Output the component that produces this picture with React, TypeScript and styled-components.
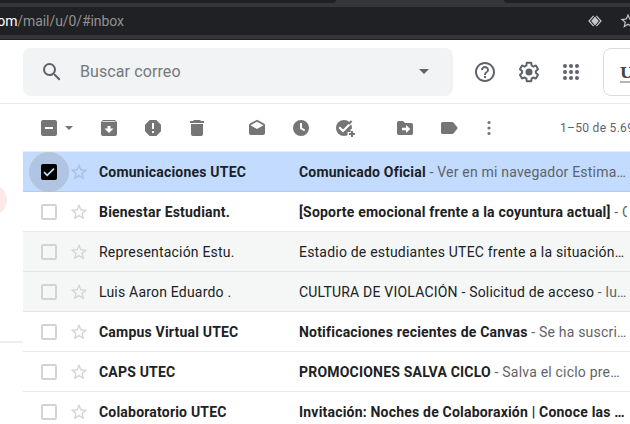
import React from "react";
import styled, { createGlobalStyle } from "styled-components";
import { MdSearch, MdHelpOutline, MdStarBorder } from "react-icons/md";

const GlobalStyle = createGlobalStyle`
  * { box-sizing: border-box; }
  body {
    margin: 0;
    background: #fff;
    font-family: Roboto, sans-serif;
    color: #202124;
    overflow: hidden;
  }
  svg { display: block; flex: none; }
`;

const Page = styled.div`
  width: 630px;
  height: 424px;
  display: flex;
  flex-direction: column;
  overflow: hidden;
`;

const TabStrip = styled.div`
  height: 3px;
  flex: none;
  display: flex;
  justify-content: space-between;
  background: #35363a;
`;

const InactiveTabs = styled.div<{ $side: "left" | "right" }>`
  width: ${(p) => (p.$side === "left" ? 336 : 126)}px;
  background: #202124;
  border-radius: ${(p) => (p.$side === "left" ? "0 0 4px 0" : "0 0 0 4px")};
`;

const BrowserBar = styled.div`
  height: 37px;
  flex: none;
  background: #35363a;
  border-bottom: 1px solid #202124;
  padding: 4px 0;
`;

const AddressField = styled.div`
  height: 28px;
  display: flex;
  align-items: center;
  background: #202124;
  color: #9aa0a6;
`;

const Url = styled.div`
  width: 590px;
  flex: none;
  margin-left: -10px;
  font-size: 14px;
  line-height: 28px;
  letter-spacing: -0.08px;
  color: #909193;
  white-space: nowrap;
`;

const Host = styled.span`
  color: #fff;
`;

const AddressIcons = styled.div`
  display: flex;
  align-items: center;
  gap: 17px;
  margin-left: 8px;
  color: #c4c5c7;
`;

const Header = styled.header`
  height: 64px;
  flex: none;
  display: flex;
  align-items: center;
  padding-left: 23px;
  border-bottom: 1px solid #ebebeb;
  color: #5f6368;
`;

const SearchBox = styled.div`
  width: 430px;
  height: 48px;
  flex: none;
  display: flex;
  align-items: center;
  padding: 0 24px 0 17px;
  border-radius: 8px;
  background: #f1f3f4;
`;

const Placeholder = styled.span`
  flex: 1;
  margin-left: 16px;
  font-size: 16px;
  letter-spacing: 0.1px;
  color: #75787b;
`;

const HeaderActions = styled.div`
  display: flex;
  gap: 20px;
  margin-left: 20px;
`;

const AppsButton = styled.div`
  margin-left: -2px;
`;

const AccountCard = styled.div`
  width: 80px;
  height: 48px;
  flex: none;
  margin-left: 20px;
  padding: 17px 0 0 16px;
  border: 1px solid #dadce0;
  border-radius: 8px;
`;

const Brand = styled.div`
  width: 50px;
  height: 17px;
  border-bottom: 2px solid #b4b4b4;
  font: bold 15px/15px "DejaVu Serif", serif;
  color: #444;
`;

const Body = styled.div`
  flex: 1;
  min-height: 0;
  display: flex;
`;

const SideNav = styled.aside`
  width: 23px;
  flex: none;
  display: flex;
  flex-direction: column;
`;

const ActiveFolder = styled.div`
  width: 7px;
  height: 32px;
  flex: none;
  margin-top: 80px;
  overflow: hidden;
  display: flex;
  justify-content: flex-end;

  &::before {
    content: "";
    width: 32px;
    flex: none;
    border-radius: 16px;
    background: #fce8e6;
  }
`;

const NavDivider = styled.div`
  height: 2px;
  margin-top: 125px;
  background: #eeeef0;
  border-radius: 0 2px 0 0;
`;

const Main = styled.main`
  width: 607px;
`;

const Toolbar = styled.div`
  height: 48px;
  display: flex;
  align-items: center;
  padding-left: 16px;
  border-bottom: 1px solid #ececec;
  color: #757575;
`;

const ToolButton = styled.div<{ $width?: number }>`
  width: ${(p) => p.$width ?? 44}px;
  height: 40px;
  flex: none;
  display: flex;
  align-items: center;
  justify-content: center;
`;

const ToolGroup = styled.div<{ $gap?: number }>`
  display: flex;
  margin-left: ${(p) => p.$gap ?? 8}px;
`;

const Separator = styled.div`
  width: 1px;
  height: 20px;
  margin-left: 7px;
  background: #e8e8ec;
`;

const Counter = styled.span`
  margin-left: 53px;
  font-size: 12px;
  letter-spacing: 0.3px;
  color: #5f6368;
  white-space: nowrap;
`;

const Row = styled.div<{ $tone: "selected" | "read" | "unread" }>`
  height: 40px;
  display: flex;
  align-items: center;
  padding-left: 6px;
  font-size: 14px;
  font-weight: ${(p) => (p.$tone === "read" ? 400 : 700)};
  letter-spacing: 0.2px;
  white-space: pre;
  border-bottom: 1px solid ${(p) => (p.$tone === "selected" ? "#b0cbee" : p.$tone === "read" ? "#e2e5e5" : "#ebebeb")};
  background: ${(p) => (p.$tone === "selected" ? "#c2dbff" : p.$tone === "read" ? "#f5f7f7" : "#fff")};
`;

const CheckArea = styled.div<{ $on: boolean }>`
  width: 40px;
  height: 40px;
  flex: none;
  display: flex;
  align-items: center;
  justify-content: center;
  border-radius: 50%;
  border: 1px solid ${(p) => (p.$on ? "#bfc3c9" : "transparent")};
  background: ${(p) => (p.$on ? "#afc5e3" : "transparent")};
`;

const CheckBox = styled.div<{ $on: boolean }>`
  width: 16px;
  height: 16px;
  border-radius: 2px;
  border: 2px solid ${(p) => (p.$on ? "#000" : "#d2d3d3")};
  background: ${(p) => (p.$on ? "#000" : "transparent")};
  display: flex;
  align-items: center;
  justify-content: center;
`;

const Star = styled.div<{ $on: boolean }>`
  width: 20px;
  color: ${(p) => (p.$on ? "#a9c0df" : "#d3d4d4")};
`;

const Sender = styled.div`
  width: 210px;
  flex: none;
  padding-left: 10px;
`;

const Subject = styled.div`
  width: 328px;
  flex: none;
  overflow: hidden;
`;

const Snippet = styled.span`
  font-weight: 400;
  color: #5f6368;
`;

const Icon = ({ children, size = 20 }: { children: React.ReactNode; size?: number }) => (
  <svg width={size} height={size} viewBox={`0 0 ${size} ${size}`} fill="currentColor">
    {children}
  </svg>
);

const GearIcon = () => (
  <svg width="24" height="24" viewBox="0 0 24 24" fill="currentColor">
    <path d="M13.85 22.25h-3.7c-.74 0-1.36-.54-1.45-1.27l-.27-1.89c-.27-.14-.53-.29-.79-.46l-1.8.72c-.7.26-1.47-.03-1.81-.65L2.2 15.53c-.35-.66-.2-1.44.36-1.88l1.53-1.19c-.01-.15-.02-.3-.02-.46 0-.15.01-.31.02-.46l-1.52-1.19c-.59-.45-.74-1.26-.37-1.88l1.85-3.19c.34-.62 1.11-.9 1.79-.63l1.81.73c.26-.17.52-.32.78-.46l.27-1.91c.09-.7.71-1.25 1.44-1.25h3.7c.74 0 1.36.54 1.45 1.27l.27 1.89c.27.14.53.29.79.46l1.8-.72c.71-.26 1.48.03 1.82.65l1.84 3.18c.36.66.2 1.44-.36 1.88l-1.52 1.19c.01.15.02.3.02.46s-.01.31-.02.46l1.52 1.19c.56.45.72 1.23.37 1.86l-1.86 3.22c-.34.62-1.11.9-1.8.63l-1.8-.72c-.26.17-.52.32-.78.46l-.27 1.91c-.1.68-.72 1.22-1.46 1.22zm-3.23-2h2.76l.37-2.55.53-.22c.44-.18.88-.44 1.34-.78l.45-.34 2.38.96 1.38-2.4-2.03-1.58.07-.56c.03-.26.06-.51.06-.78s-.03-.53-.06-.78l-.07-.56 2.03-1.58-1.39-2.4-2.39.96-.45-.35c-.42-.32-.87-.58-1.33-.77l-.52-.22-.37-2.55h-2.76l-.37 2.55-.53.21c-.44.19-.88.44-1.34.79l-.45.33-2.38-.95-1.39 2.39 2.03 1.58-.07.56a7 7 0 0 0-.06.79c0 .26.02.53.06.78l.07.56-2.03 1.58 1.38 2.4 2.39-.96.45.35c.43.33.86.58 1.33.77l.53.22.38 2.55z" />
    <circle cx="12" cy="12" r="3.5" />
  </svg>
);

const AppsIcon = () => (
  <Icon size={24}>
    {[6, 12, 18].map((y) => [6, 12, 18].map((x) => <circle key={`${x}-${y}`} cx={x} cy={y} r="2" />))}
  </Icon>
);

const mails = [
  { from: "Comunicaciones UTEC", subject: "Comunicado Oficial", text: "Ver en mi navegador Estima…", tone: "selected" },
  { from: "Bienestar Estudiant.", subject: "[Soporte emocional frente a la coyuntura actual]", text: "C", tone: "unread" },
  { from: "Representación Estu.", subject: "Estadio de estudiantes UTEC frente a la situación…", text: "", tone: "read" },
  { from: "Luis Aaron Eduardo .", subject: "CULTURA DE VIOLACIÓN - Solicitud de acceso", text: "lu…", tone: "read" },
  { from: "Campus Virtual UTEC", subject: "Notificaciones recientes de Canvas", text: "Se ha suscri…", tone: "unread" },
  { from: "CAPS UTEC", subject: "PROMOCIONES SALVA CICLO", text: "Salva el ciclo pre…", tone: "unread" },
  { from: "Colaboratorio UTEC", subject: "Invitación: Noches de Colaboraxión | Conoce las …", text: "", tone: "unread" },
] as const;

export default function App() {
  return (
    <Page>
      <GlobalStyle />
      <TabStrip>
        <InactiveTabs $side="left" />
        <InactiveTabs $side="right" />
      </TabStrip>
      <BrowserBar>
        <AddressField>
          <Url><Host>com</Host>/mail/u/0/#inbox</Url>
          <AddressIcons>
            <svg width="14" height="12" viewBox="0 0 14 12" fill="none" stroke="currentColor">
              <path d="M5.6.8 1 6l4.6 5.2M8.4.8 13 6l-4.6 5.2" strokeWidth="1.2" />
              <path d="M7 1.6 10.8 6 7 10.4 3.2 6z" fill="currentColor" stroke="none" />
            </svg>
            <MdStarBorder size={18} />
          </AddressIcons>
        </AddressField>
      </BrowserBar>

      <Header>
        <SearchBox>
          <MdSearch size={24} />
          <Placeholder>Buscar correo</Placeholder>
          <svg width="10" height="5" viewBox="0 0 10 5" fill="currentColor"><path d="M0 0h10L5 5z" /></svg>
        </SearchBox>
        <HeaderActions>
          <MdHelpOutline size={24} />
          <GearIcon />
          <AppsButton><AppsIcon /></AppsButton>
        </HeaderActions>
        <AccountCard><Brand>UTEC</Brand></AccountCard>
      </Header>

      <Body>
        <SideNav>
          <ActiveFolder />
          <NavDivider />
        </SideNav>
        <Main>
          <Toolbar>
            <ToolButton $width={20}>
              <Icon><path fillRule="evenodd" d="M4 2h12a2 2 0 0 1 2 2v12a2 2 0 0 1-2 2H4a2 2 0 0 1-2-2V4a2 2 0 0 1 2-2zm2 7v2h8V9z" /></Icon>
            </ToolButton>
            <ToolButton $width={20}>
              <svg width="8" height="4" viewBox="0 0 8 4" fill="currentColor"><path d="M0 0h8L4 4z" /></svg>
            </ToolButton>
            <ToolGroup>
              <ToolButton>
                <Icon><path fillRule="evenodd" d="M4 2h12l2 2.2V16a2 2 0 0 1-2 2H4a2 2 0 0 1-2-2V4.2zm0 1.2-.8.9h13.6l-.8-.9zM8.5 8v2.5H5.5L10 15l4.5-4.5h-3V8z" /></Icon>
              </ToolButton>
              <ToolButton>
                <Icon><path fillRule="evenodd" d="M6.7 2h6.6L18 6.7v6.6L13.3 18H6.7L2 13.3V6.7zM9 5v6h2V5zm0 8v2h2v-2z" /></Icon>
              </ToolButton>
              <ToolButton>
                <Icon><path d="M7 2h6l1 1h3v2H3V3h3zM4 6h12v10.2a1.8 1.8 0 0 1-1.8 1.8H5.8A1.8 1.8 0 0 1 4 16.2z" /></Icon>
              </ToolButton>
            </ToolGroup>
            <Separator />
            <ToolGroup $gap={9}>
              <ToolButton>
                <Icon><path fillRule="evenodd" d="M10 1.8 17 5.5q1 .6 1 1.6V15a2 2 0 0 1-2 2H4a2 2 0 0 1-2-2V7.1q0-1 1-1.6zM10 3.8 3.5 7.2 10 11l6.5-3.8z" /></Icon>
              </ToolButton>
              <ToolButton>
                <Icon><path fillRule="evenodd" d="M10 2a8 8 0 1 0 0 16 8 8 0 0 0 0-16zM9 5h2v4.7l3.2 2-.9 1.6L9 10.8z" /></Icon>
              </ToolButton>
              <ToolButton>
                <svg width="22" height="22" viewBox="0 0 22 22" fill="currentColor">
                  <circle cx="10" cy="11" r="8" />
                  <path d="M5.2 10.2 9 14l9.5-9.5" fill="none" stroke="#fff" strokeWidth="2.2" />
                  <path d="m16.8 3.2 1.6 1.6-3 3-1.6-1.6z" />
                  <path d="M13.6 15h3v-3h7v10h-10z" fill="#fff" />
                  <path d="M17 14h2v2h2v2h-2v2h-2v-2h-2v-2h2z" />
                </svg>
              </ToolButton>
            </ToolGroup>
            <Separator />
            <ToolGroup $gap={9}>
              <ToolButton>
                <Icon><path fillRule="evenodd" d="M3.8 3H8l2 2h6.2A1.8 1.8 0 0 1 18 6.8v8.4a1.8 1.8 0 0 1-1.8 1.8H3.8A1.8 1.8 0 0 1 2 15.2V4.8A1.8 1.8 0 0 1 3.8 3zM11 7v2.8H7v2.4h4V15l4.3-4z" /></Icon>
              </ToolButton>
              <ToolButton>
                <Icon><path d="M3.6 4h9.6q.9 0 1.5.8L18.8 10l-4.1 5.2q-.6.8-1.5.8H3.6A1.6 1.6 0 0 1 2 14.4V5.6A1.6 1.6 0 0 1 3.6 4z" /></Icon>
              </ToolButton>
              <ToolButton $width={36}>
                <Icon>
                  <circle cx="10" cy="4.5" r="1.6" />
                  <circle cx="10" cy="10" r="1.6" />
                  <circle cx="10" cy="15.5" r="1.6" />
                </Icon>
              </ToolButton>
            </ToolGroup>
            <Counter>1–50 de 5.695</Counter>
          </Toolbar>
          {mails.map((mail) => {
            const on = mail.tone === "selected";
            return (
              <Row key={mail.from} $tone={mail.tone}>
                <CheckArea $on={on}>
                  <CheckBox $on={on}>
                    {on && (
                      <svg width="12" height="12" viewBox="0 0 12 12" fill="none" stroke="#c2dbff" strokeWidth="1.7">
                        <path d="M1 6.2 4.2 9.4 11 2.6" />
                      </svg>
                    )}
                  </CheckBox>
                </CheckArea>
                <Star $on={on}><MdStarBorder size={20} /></Star>
                <Sender>{mail.from}</Sender>
                <Subject>
                  {mail.subject}
                  {mail.text && <Snippet> - {mail.text}</Snippet>}
                </Subject>
              </Row>
            );
          })}
        </Main>
      </Body>
    </Page>
  );
}
